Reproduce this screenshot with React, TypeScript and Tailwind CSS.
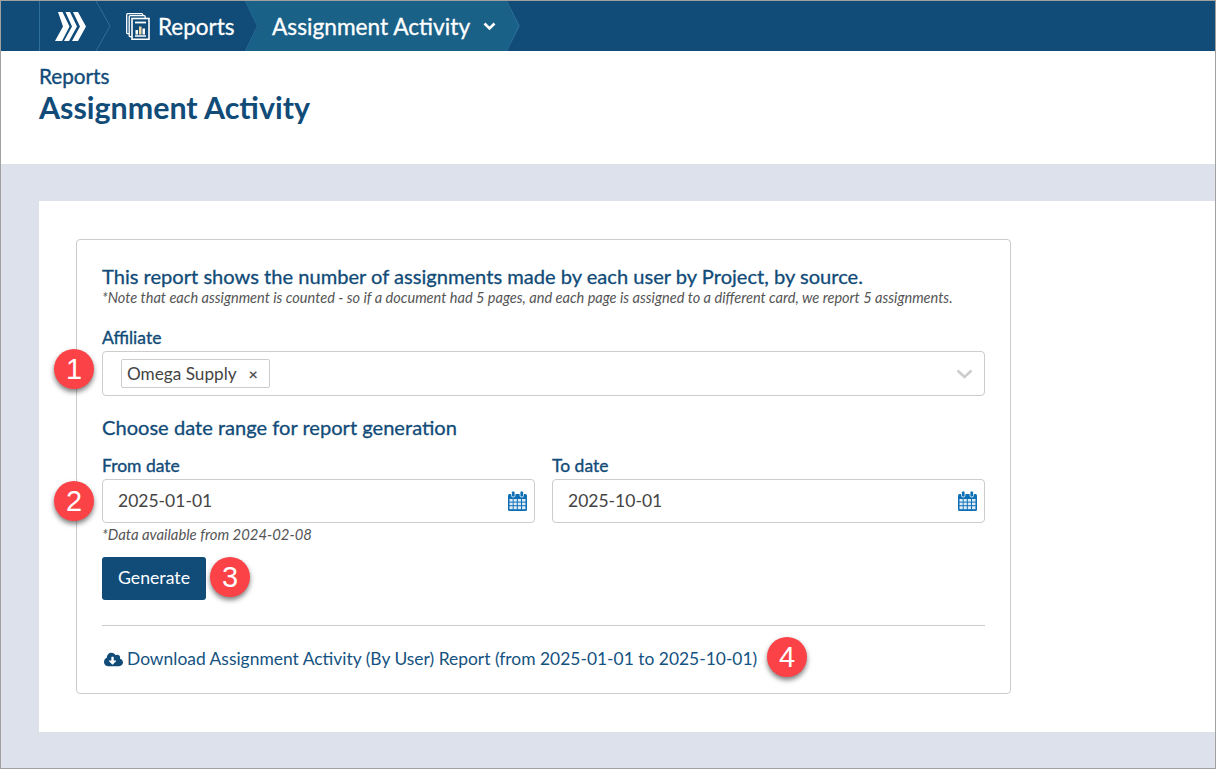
import { FaCloudDownloadAlt } from "react-icons/fa";

function Logo() {
  return (
    <svg width="31" height="29" viewBox="0 0 31 29" fill="#fff">
      <path d="M3 0h4.500l7 14.500L7 29H0l8-14.500z" />
      <path d="M10.500 0h4.500l7 14.500-8 14.500H9l8-14.500z" />
      <path d="M18 0h5l8 14.500L23 29h-6l8-14.500z" />
    </svg>
  );
}

function ReportsIcon() {
  return (
    <svg width="24" height="27" viewBox="0 0 24 27" fill="none" stroke="#fff" strokeWidth="1.3">
      <rect x="0.7" y="0.7" width="16" height="20" rx="1" />
      <rect x="3.2" y="2.7" width="16" height="21" rx="1" fill="#114b78" />
      <rect x="6" y="5.5" width="17" height="20.800" fill="#114b78" strokeWidth="1.600" />
      <path d="M9 9.500h11" strokeWidth="1.800" />
      <path d="M9 23h11" strokeWidth="1.500" />
      <rect x="9.500" y="17" width="2.500" height="4.500" fill="#fff" stroke="none" />
      <rect x="13" y="13.500" width="2.500" height="8" fill="#f3d9a4" stroke="none" />
      <rect x="16.500" y="15.500" width="2.500" height="6" fill="#fff" stroke="none" />
    </svg>
  );
}

function Crumb({ w, side }: { w: number; side: "left" | "right" }) {
  return (
    <svg
      className={side === "left" ? "absolute top-0 left-0 h-[50px]" : "absolute top-0 right-0 h-[50px]"}
      width={w}
      height="50"
      viewBox={`0 0 ${w} 50`}
      fill="none"
      stroke="#2f7096"
    >
      <path d={`M0 0 L${w - 1} 25 L0 50`} />
    </svg>
  );
}

function CalendarIcon() {
  return (
    <svg width="19" height="20" viewBox="0 0 19 20" fill="#0f6fb5">
      <rect x="0" y="3" width="19" height="17" rx="1.500" />
      <rect x="3.500" y="0" width="3.500" height="6" rx="1.500" stroke="#fff" strokeWidth="0.800" />
      <rect x="12" y="0" width="3.500" height="6" rx="1.500" stroke="#fff" strokeWidth="0.800" />
      <g fill="#dcebf7">
        <rect x="1.500" y="8" width="3.200" height="2.600" />
        <rect x="5.600" y="8" width="3.200" height="2.600" />
        <rect x="9.800" y="8" width="3.200" height="2.600" />
        <rect x="14" y="8" width="3.500" height="2.600" />
        <rect x="1.500" y="11.600" width="3.200" height="2.600" />
        <rect x="5.600" y="11.600" width="3.200" height="2.600" />
        <rect x="9.800" y="11.600" width="3.200" height="2.600" />
        <rect x="14" y="11.600" width="3.500" height="2.600" />
        <rect x="1.500" y="15.200" width="3.200" height="3" />
        <rect x="5.600" y="15.200" width="3.200" height="3" />
        <rect x="9.800" y="15.200" width="3.200" height="3" />
        <rect x="14" y="15.200" width="3.500" height="3" />
      </g>
    </svg>
  );
}

function Badge({ n, className }: { n: number; className: string }) {
  return (
    <div
      className={
        "absolute flex h-10 w-10 items-center justify-center rounded-full bg-[#fb4246] font-['Liberation_Sans',sans-serif] text-[29px] leading-none text-white shadow-[0_3px_5px_rgba(0,0,0,0.5)] " +
        className
      }
    >
      {n}
    </div>
  );
}

function DateField({ label, value }: { label: string; value: string }) {
  return (
    <div className="flex flex-1 flex-col">
      <label className="mb-[2px] text-[17.500px] leading-[22px] text-[#114b78] [-webkit-text-stroke:0.35px_#114b78]">{label}</label>
      <div className="flex h-[44px] items-center justify-between rounded-[4px] border border-[#cccccc] bg-white pr-[7px] pl-[15px] text-[17.500px] text-[#444444]">
        <span>{value}</span>
        <CalendarIcon />
      </div>
    </div>
  );
}

export default function App() {
  return (
    <div className="flex h-[769px] w-[1216px] flex-col overflow-hidden border border-[#a0a0a0] bg-[#dce1ec] font-['Lato',sans-serif]">
      {/* top nav */}
      <div className="flex h-[50px] shrink-0 items-stretch bg-[#114b78] pl-[38px] text-white">
        <div className="relative flex w-[72px] items-center border-l border-[#2f7096] pl-[15px]">
          <Logo />
          <Crumb w={15} side="right" />
        </div>
        <div className="flex w-[134px] items-center gap-[8px] pl-[15px] text-[22.500px]">
          <ReportsIcon />
          <span className="pt-[2px] [-webkit-text-stroke:0.3px_#fff]">Reports</span>
        </div>
        <div className="relative flex w-[275px] items-center bg-[#1a6188] pl-[27px] text-[22.700px] [clip-path:polygon(0_0,262px_0,275px_50%,262px_100%,0_100%,12px_50%)]">
          <Crumb w={13} side="left" />
          <span className="pt-[2px] [-webkit-text-stroke:0.3px_#fff]">Assignment Activity</span>
          <svg className="ml-[13px]" width="13" height="9" viewBox="0 0 13 9" fill="none" stroke="#fff" strokeWidth="2.600">
            <path d="M1.500 1.500 6.500 6.500 11.500 1.500" />
          </svg>
          <Crumb w={13} side="right" />
        </div>
      </div>

      {/* page title */}
      <div className="flex h-[113px] shrink-0 flex-col bg-white pt-[13px] pl-[38px] text-[#114b78]">
        <div className="text-[20.700px] leading-[24px] [-webkit-text-stroke:0.35px_#114b78]">Reports</div>
        <h1 className="text-[30.400px] leading-[38px] font-bold">Assignment Activity</h1>
      </div>

      {/* content */}
      <div className="mt-[37px] ml-[38px] h-[531px] bg-white pt-[38px] pl-[37px]">
        <div className="relative h-[455px] w-[935px] rounded-[4px] border border-[#cccccc] px-[25px] pt-[24px]">
          <p className="text-[20.100px] leading-[24px] text-[#114b78] [-webkit-text-stroke:0.3px_#114b78]">
            This report shows the number of assignments made by each user by Project, by source.
          </p>
          <p className="text-[14.550px] leading-[20px] text-[#555555] italic">
            *Note that each assignment is counted - so if a document had 5 pages, and each page is assigned to a different card, we report 5 assignments.
          </p>

          <label className="mt-[18px] block text-[17.500px] leading-[24px] text-[#114b78] [-webkit-text-stroke:0.35px_#114b78]">Affiliate</label>
          <div className="mt-[1px] flex h-[45px] items-center justify-between rounded-[4px] border border-[#cccccc] pr-[11px] pl-[18px]">
            <div className="flex h-[29px] w-[149px] items-center rounded-[2px] border border-[#cccccc] pl-[5px] text-[17.200px] text-[#444444]">
              Omega Supply
              <span className="ml-[12px] text-[16px] font-bold text-[#555555]">×</span>
            </div>
            <svg width="17" height="10" viewBox="0 0 17 10" fill="none" stroke="#cccccc" strokeWidth="2.500">
              <path d="M1.500 1.500 8.500 8 15.500 1.500" />
            </svg>
          </div>

          <h2 className="mt-[18px] text-[20.100px] leading-[26px] text-[#114b78] [-webkit-text-stroke:0.3px_#114b78]">Choose date range for report generation</h2>

          <div className="mt-[15px] flex gap-[17px]">
            <DateField label="From date" value="2025-01-01" />
            <DateField label="To date" value="2025-10-01" />
          </div>
          <p className="mt-[1px] text-[14.850px] leading-[20px] text-[#555555] italic">*Data available from 2024-02-08</p>

          <button className="mt-[13px] block h-[43px] w-[104px] rounded-[3px] bg-[#114b78] text-[17.700px] text-white">Generate</button>

          <div className="mt-[25px] flex items-center border-t border-[#cccccc] pt-[22px] text-[17.430px] leading-[22px] text-[#14527f]">
            <FaCloudDownloadAlt className="mr-[4px] ml-[2px] text-[19px] text-[#114b78]" />
            <span>Download Assignment Activity (By User) Report (from 2025-01-01 to 2025-10-01)</span>
          </div>

          <Badge n={1} className="top-[109px] left-[-23px]" />
          <Badge n={2} className="top-[241px] left-[-23px]" />
          <Badge n={3} className="top-[317px] left-[133px]" />
          <Badge n={4} className="top-[397px] left-[690px]" />
        </div>
      </div>
    </div>
  );
}
